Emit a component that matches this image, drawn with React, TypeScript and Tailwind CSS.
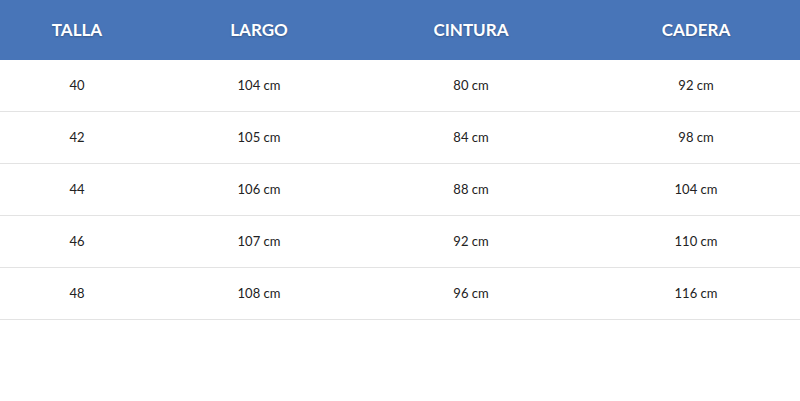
import React from 'react';

const rows = [
  ['40', '104 cm', '80 cm', '92 cm'],
  ['42', '105 cm', '84 cm', '98 cm'],
  ['44', '106 cm', '88 cm', '104 cm'],
  ['46', '107 cm', '92 cm', '110 cm'],
  ['48', '108 cm', '96 cm', '116 cm'],
];

const cols = 'grid grid-cols-[154px_210px_214px_1fr]';

export default function App() {
  return (
    <div className="w-[800px] h-[401px] bg-white font-['Lato',sans-serif]">
      <div className={`${cols} h-[60px] items-center bg-[#4875b8] text-white font-bold text-[17px] [text-shadow:0_1px_2px_rgba(0,0,0,0.25)]`}>
        <div className="text-center">TALLA</div>
        <div className="text-center">LARGO</div>
        <div className="text-center">CINTURA</div>
        <div className="text-center pl-[14px]">CADERA</div>
      </div>
      {rows.map((r) => (
        <div key={r[0]} className={`${cols} h-[52px] items-center border-b border-[#e3e3e3] text-[13px] text-[#222]`}>
          <div className="text-center">{r[0]}</div>
          <div className="text-center">{r[1]}</div>
          <div className="text-center">{r[2]}</div>
          <div className="text-center pl-[14px]">{r[3]}</div>
        </div>
      ))}
    </div>
  );
}
